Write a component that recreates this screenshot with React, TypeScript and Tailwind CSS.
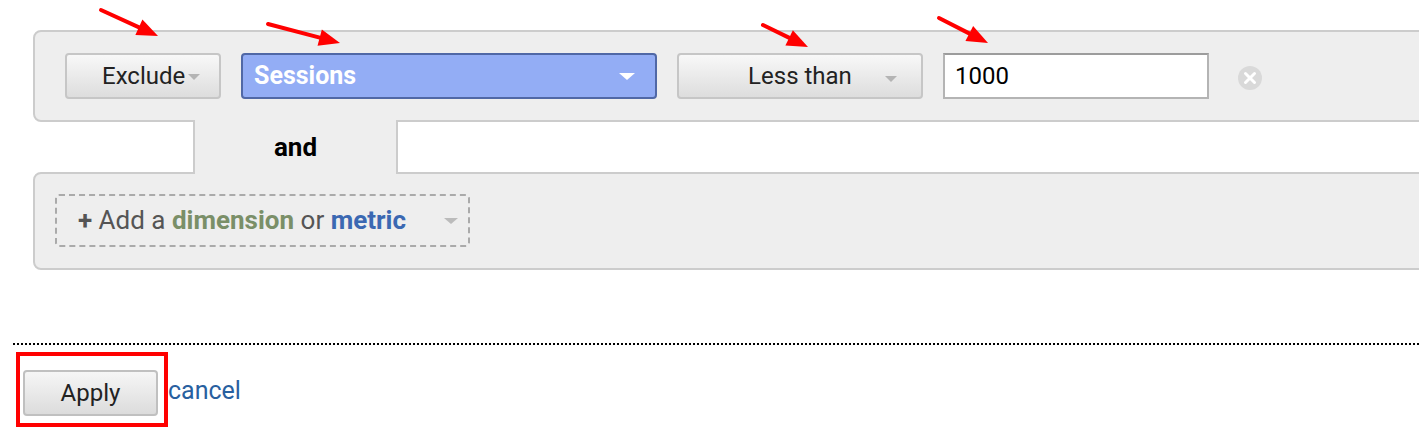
import React from "react";

// red annotation arrows: tail -> tip
const arrows = [
  { x1: 101, y1: 10, x2: 158, y2: 36 },
  { x1: 268, y1: 24, x2: 340, y2: 43 },
  { x1: 763, y1: 25, x2: 808, y2: 47 },
  { x1: 939, y1: 18, x2: 988, y2: 43 },
];

function Arrow({ x1, y1, x2, y2 }: { x1: number; y1: number; x2: number; y2: number }) {
  const len = Math.hypot(x2 - x1, y2 - y1);
  const dx = (x2 - x1) / len;
  const dy = (y2 - y1) / len;
  const head = 21;
  const half = 8.5;
  const bx = x2 - dx * head;
  const by = y2 - dy * head;
  const pts = `${x2},${y2} ${bx - dy * half},${by + dx * half} ${bx + dy * half},${by - dx * half}`;
  return (
    <g>
      <line x1={x1} y1={y1} x2={bx + dx * 2} y2={by + dy * 2} stroke="#ff0000" strokeWidth={4} strokeLinecap="round" />
      <polygon points={pts} fill="#ff0000" />
    </g>
  );
}

function Caret({ className }: { className: string }) {
  return <span className={"inline-block h-0 w-0 border-x-transparent " + className} />;
}

export default function App() {
  return (
    <div className="relative h-[436px] w-[1419px] overflow-hidden bg-white font-['Roboto',sans-serif]">
      <div className="pl-[33px] pt-[30px]">
        {/* condition row */}
        <div className="flex h-[92px] w-[1420px] items-center gap-[20px] rounded-l-[8px] border-2 border-[#cccccc] bg-[#eeeeee] pl-[30px]">
          <div className="flex h-[46px] w-[156px] items-center rounded-[4px] border-2 border-[#c6c6c6] bg-gradient-to-b from-[#f8f8f8] to-[#dddddd] pl-[35px] text-[24px] text-[#222222]">
            <span>Exclude</span>
            <Caret className="ml-[3px] mt-[2px] border-x-[6px] border-t-[6px] border-t-[#b4b4b4]" />
          </div>

          <div className="flex h-[46px] w-[416px] items-center justify-between rounded-[4px] border-2 border-[#5068a6] bg-[#93adf5] pl-[11px] pr-[20px] text-[25px] font-bold text-white">
            <span>Sessions</span>
            <Caret className="border-x-[8px] border-t-[7px] border-t-white" />
          </div>

          <div className="relative flex h-[46px] w-[246px] items-center justify-center rounded-[4px] border-2 border-[#c6c6c6] bg-gradient-to-b from-[#f8f8f8] to-[#dddddd] text-[24px] text-[#222222]">
            <span>Less than</span>
            <Caret className="absolute right-[24px] top-[21px] border-x-[6px] border-t-[6px] border-t-[#b4b4b4]" />
          </div>

          <div className="flex h-[46px] w-[266px] items-center border-2 border-[#b4b4b4] border-t-[#9c9c9c] bg-white pl-[10px] text-[24px] text-black">
            1000
          </div>

          <svg width="26" height="26" viewBox="0 0 26 26" className="ml-[8px] mt-[4px]">
            <circle cx="13" cy="13" r="12" fill="#d9d9d9" />
            <path d="M8.5 8.5 L17.5 17.5 M17.5 8.5 L8.5 17.5" stroke="#ffffff" strokeWidth="3" strokeLinecap="round" />
          </svg>
        </div>

        {/* and tab */}
        <div className="relative z-10 -my-[2px] ml-[160px] flex h-[54px] w-[205px] items-center justify-center border-x-2 border-[#cccccc] bg-[#eeeeee] text-[26px] font-bold text-black">
          and
        </div>

        {/* add row */}
        <div className="h-[98px] w-[1420px] rounded-l-[8px] border-2 border-[#cccccc] bg-[#eeeeee] pl-[20px] pt-[20px]">
          <div className="flex h-[53px] w-[415px] items-center justify-between rounded-[4px] border-2 border-dashed border-[#aaaaaa] pl-[21px] pr-[10px] text-[26px] text-[#555555]">
            <span>
              <span className="font-bold">+</span> Add a{" "}
              <span className="font-bold text-[#7a8f68]">dimension</span> or{" "}
              <span className="font-bold text-[#3b68b2]">metric</span>
            </span>
            <Caret className="border-x-[7px] border-t-[6px] border-t-[#bbbbbb]" />
          </div>
        </div>
      </div>

      {/* footer */}
      <div className="ml-[13px] mt-[73px] border-t-2 border-dotted border-black" />
      <div className="mt-[25px] flex items-center gap-[10px] pl-[23px]">
        <button className="flex h-[46px] w-[135px] items-center justify-center rounded-[4px] border-2 border-[#c0c0c0] bg-gradient-to-b from-[#f6f6f6] to-[#dcdcdc] text-[24px] text-[#222222]">
          Apply
        </button>
        <a className="-mt-[4px] text-[25px] text-[#28609f]">cancel</a>
      </div>

      {/* annotations */}
      <div className="pointer-events-none absolute left-[16px] top-[352px] h-[75px] w-[152px] border-[4px] border-[#ff0000]" />
      <svg className="pointer-events-none absolute left-0 top-0" width="1419" height="436">
        {arrows.map((a, i) => (
          <Arrow key={i} {...a} />
        ))}
      </svg>
    </div>
  );
}
